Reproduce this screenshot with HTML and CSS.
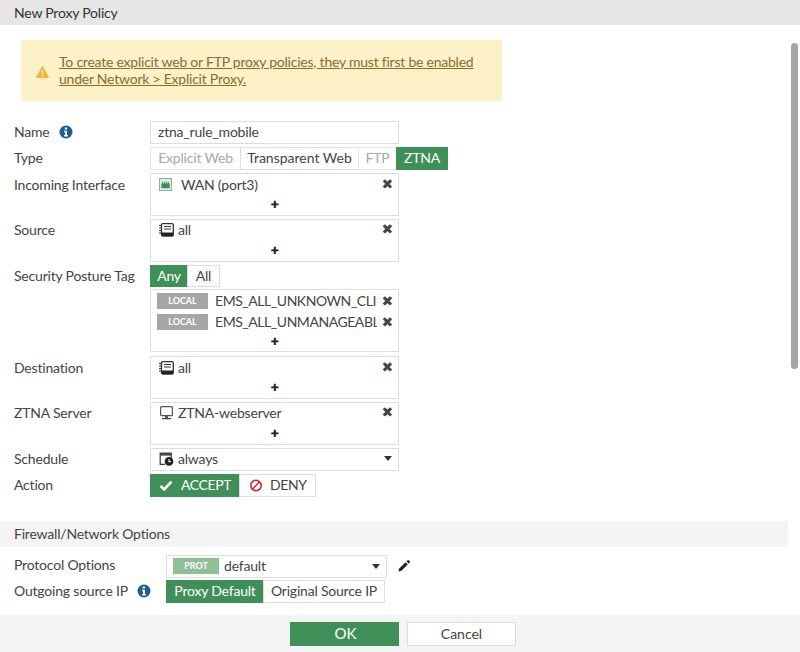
FILE: index.html
```html
<!DOCTYPE html>
<html lang="en">
<head>
<meta charset="utf-8">
<title>New Proxy Policy</title>
<link rel="stylesheet" href="styles.css">
</head>
<body>
<div class="page">
  <header class="title">New Proxy Policy</header>
  <main class="content">
    <div class="notice">
      <svg class="notice-icon" viewBox="0 0 14 13"><path d="M7 .6 13.6 12.4H.4Z" fill="#f5b335" stroke="#f5b335" stroke-linejoin="round"/><path d="M6.2 4.2h1.600l-.2 4.600H6.400ZM6.200 9.600h1.600v1.600H6.200Z" fill="#fdf1c8"/></svg>
      <a class="notice-text">To create explicit web or FTP proxy policies, they must first be enabled under Network &gt; Explicit Proxy.</a>
    </div>

    <div class="row r-name">
      <label class="label">Name <svg class="info" viewBox="0 0 14 14"><circle cx="7" cy="7" r="6.500" fill="#165f96"/><path d="M5.800 2.600h2.200v2H5.800ZM5 5.800h3v4.200h1v1.400H5V10h1V7.200H5Z" fill="#fff"/></svg></label>
      <div class="input">ztna_rule_mobile</div>
    </div>
    <div class="row r-type">
      <label class="label">Type</label>
      <div class="seg">
        <span class="opt dim w-explicit">Explicit Web</span><span class="opt solid w-transparent">Transparent Web</span><span class="opt dim w-ftp">FTP</span><span class="opt on w-ztna">ZTNA</span>
      </div>
    </div>
    <div class="row r-list r-first">
      <label class="label">Incoming Interface</label>
      <div class="list">
        <div class="item">
          <svg class="ic ic-wan" viewBox="0 0 14 14"><rect x=".5" y=".5" width="13" height="13" fill="#dfeee4" stroke="#8fa89a"/><path d="M2.500 11V6h1V4h1v2h1V4h1v2h1V4h1v2h1V4h1v2h1v5Z" fill="#3f8f58"/></svg>
          <span class="item-text">WAN (port3)</span>
          <span class="x">✖</span>
        </div>
        <div class="plus">✚</div>
      </div>
    </div>
    <div class="row r-list">
      <label class="label">Source</label>
      <div class="list">
        <div class="item">
          <svg class="ic ic-addr" viewBox="0 0 15 14"><rect x="2.500" y=".7" width="11.800" height="12.300" rx="1.200" fill="#fff" stroke="#333" stroke-width="1.300"/><path d="M0 2.500h2.500M0 5h2.500M0 7.500h2.500M0 10h2.500" stroke="#333" stroke-width="1.100"/><path d="M5 3.500h7M5 6h7" stroke="#333" stroke-width="1.100"/><rect x="3" y="9.500" width="11" height="3.500" fill="#222"/></svg>
          <span class="item-text">all</span>
          <span class="x">✖</span>
        </div>
        <div class="plus">✚</div>
      </div>
    </div>
    <div class="row r-any">
      <label class="label">Security Posture Tag</label>
      <div class="seg">
        <span class="opt on w-any">Any</span><span class="opt solid w-all">All</span>
      </div>
    </div>
    <div class="row r-tags">
      <span class="label"></span>
      <div class="list list-tags">
        <div class="item tag-item">
          <span class="badge">LOCAL</span>
          <span class="tag-text">EMS_ALL_UNKNOWN_CLIENTS</span>
          <span class="x">✖</span>
        </div>
        <div class="item tag-item">
          <span class="badge">LOCAL</span>
          <span class="tag-text">EMS_ALL_UNMANAGEABLE_CLIENTS</span>
          <span class="x">✖</span>
        </div>
        <div class="plus">✚</div>
      </div>
    </div>
    <div class="row r-list r-first">
      <label class="label">Destination</label>
      <div class="list">
        <div class="item">
          <svg class="ic ic-addr" viewBox="0 0 15 14"><rect x="2.500" y=".7" width="11.800" height="12.300" rx="1.200" fill="#fff" stroke="#333" stroke-width="1.300"/><path d="M0 2.500h2.500M0 5h2.500M0 7.500h2.500M0 10h2.500" stroke="#333" stroke-width="1.100"/><path d="M5 3.500h7M5 6h7" stroke="#333" stroke-width="1.100"/><rect x="3" y="9.500" width="11" height="3.500" fill="#222"/></svg>
          <span class="item-text">all</span>
          <span class="x">✖</span>
        </div>
        <div class="plus">✚</div>
      </div>
    </div>
    <div class="row r-list">
      <label class="label">ZTNA Server</label>
      <div class="list">
        <div class="item">
          <svg class="ic ic-addr" viewBox="0 0 15 14"><rect x="1.600" y=".7" width="11.800" height="9" rx="1" fill="#fff" stroke="#555" stroke-width="1.200"/><path d="M6 9.700h3V12H6Z" fill="#555"/><path d="M3 12.600h9" stroke="#444" stroke-width="1.300"/></svg>
          <span class="item-text">ZTNA-webserver</span>
          <span class="x">✖</span>
        </div>
        <div class="plus">✚</div>
      </div>
    </div>
    <div class="row r-sched">
      <label class="label">Schedule</label>
      <div class="select">
        <svg class="ic ic-addr" viewBox="0 0 15 14"><path d="M6 12.400H1.200V1.200h11v5" fill="none" stroke="#444" stroke-width="1.300"/><rect x="1" y="1" width="11.400" height="2.600" fill="#444"/><circle cx="10" cy="9.400" r="4.300" fill="#222"/><path d="M10 7v2.600h1.800" fill="none" stroke="#fff" stroke-width="1.100"/></svg>
        <span class="select-text">always</span>
        <span class="caret"></span>
      </div>
    </div>
    <div class="row r-action">
      <label class="label">Action</label>
      <div class="seg">
        <span class="opt on act-accept"><svg class="act-ic" viewBox="0 0 14 12"><path d="M1.500 6.400 5.200 10 12.500 2.200" fill="none" stroke="#fff" stroke-width="2.600"/></svg>ACCEPT</span><span class="opt solid act-deny"><svg class="act-ic" viewBox="0 0 14 14"><circle cx="7" cy="7" r="5.600" fill="none" stroke="#d3232f" stroke-width="1.700"/><path d="M3 11 11 3" stroke="#d3232f" stroke-width="1.700"/></svg>DENY</span>
      </div>
    </div>

    <h2 class="section">Firewall/Network Options</h2>

    <div class="row r-proto">
      <label class="label label-wide">Protocol Options</label>
      <div class="select select-proto">
        <span class="badge badge-prot">PROT</span>
        <span class="select-text">default</span>
        <span class="caret"></span>
      </div>
      <svg class="pencil" viewBox="0 0 14 14"><path d="M1.400 12.600 2.200 9.600 8.600 3.200 10.800 5.400 4.400 11.800Z" fill="#222"/><path d="M9.400 2.400 10.600 1.200a.8.8 0 0 1 1.100 0l1.100 1.100a.8.8 0 0 1 0 1.100L11.600 4.600Z" fill="#222"/></svg>
    </div>
    <div class="row r-out">
      <label class="label label-wide">Outgoing source IP <svg class="info" viewBox="0 0 14 14"><circle cx="7" cy="7" r="6.500" fill="#165f96"/><path d="M5.800 2.600h2.200v2H5.800ZM5 5.800h3v4.200h1v1.400H5V10h1V7.200H5Z" fill="#fff"/></svg></label>
      <div class="seg">
        <span class="opt on w-proxy">Proxy Default</span><span class="opt solid w-orig">Original Source IP</span>
      </div>
    </div>
    <div class="scrollbar"></div>
  </main>
  <footer class="footer">
    <button class="btn btn-ok">OK</button>
    <button class="btn btn-cancel">Cancel</button>
  </footer>
</div>
</body>
</html>
```
FILE: styles.css
```css
* { box-sizing: border-box; }
html, body { margin: 0; height: 100%; background: #fff; overflow: hidden; }
body { font-family: Lato, "Open Sans", sans-serif; font-size: 14px; color: #444; letter-spacing: -0.2px; }
.page { width: 800px; height: 652px; display: flex; flex-direction: column; }
.title { height: 25px; line-height: 25px; padding-left: 14px; background: #e6e6e6; color: #333; flex: none; }
.content { flex: 1; position: relative; padding-top: 15px; overflow: hidden; }
.notice { margin-left: 21px; width: 481px; height: 61px; background: #fdf1c8; display: flex; align-items: center; padding: 0 0 2px 15px; margin-bottom: 20px; }
.notice-icon { width: 13px; height: 12px; flex: none; margin-right: 10px; margin-top: 4px; }
.notice-text { color: #8a6d2f; text-decoration: underline; line-height: 17px; width: 425px; letter-spacing: -0.23px; }
.row { display: flex; padding-left: 14px; }
.label { width: 136px; flex: none; display: flex; align-items: flex-start; line-height: 22px; gap: 9px; color: #444; }
.label-wide { width: 152px; }
.info { width: 14px; height: 14px; margin-top: 4px; }
.input { width: 249px; height: 23px; border: 1px solid #ddd; padding-left: 7px; line-height: 20px; color: #444; }
.r-name { margin-bottom: 3px; }
.r-type { margin-bottom: 3px; }
.seg { display: flex; height: 23px; }
.opt { border: 1px solid #e6e6e6; line-height: 20px; text-align: center; white-space: nowrap; margin-left: -1px; }
.opt:first-child { margin-left: 0; }
.dim { color: #a8a8a8; }
.solid { color: #444; border-color: #ddd; }
.on { background: #3f8f58; border-color: #3f8f58; color: #fff; }
.w-explicit { width: 91px; }
.w-transparent { width: 119px; letter-spacing: 0; }
.w-ftp { width: 39px; }
.w-ztna { width: 52px; }
.w-any { width: 38px; }
.w-all { width: 33px; }
.w-proxy { width: 98px; }
.w-orig { width: 122px; }
.list { width: 249px; height: 43px; border: 1px solid #ddd; position: relative; }
.r-list { margin-bottom: 3px; }
.r-first .label { padding-top: 1px; }
.r-first .item { padding-top: 1px; }
.item { height: 20px; margin-bottom: 2px; display: flex; align-items: center; position: relative; padding-left: 8px; line-height: 20px; }
.ic { width: 13px; height: 13px; flex: none; margin-right: 9px; }
.ic-addr { width: 15px; height: 14px; margin-right: 4px; }
.item-text { flex: 1; white-space: nowrap; }
.x { position: absolute; right: 5px; top: 0; font-size: 14px; line-height: 18px; color: #444; font-family: "DejaVu Sans", sans-serif; }
.r-first .x { top: 1px; }
.plus { text-align: center; font-size: 10px; line-height: 18px; height: 18px; color: #222; font-family: "DejaVu Sans", sans-serif; }
.r-any { margin-top: 2px; margin-bottom: 2px; }
.r-any .seg { height: 22px; }
.r-any .opt { line-height: 20px; }
.r-tags { margin-bottom: 4px; }
.list-tags { height: 63px; }
.tag-item { height: 20px; margin-bottom: 1px; padding-left: 6px; }
.tag-item .x { top: 1px; }
.tag-item:first-child { margin-top: 1px; }
.badge { width: 51px; height: 16px; background: #a6a6a6; color: #fff; font-size: 9px; font-weight: 700; line-height: 16px; letter-spacing: 0; text-align: center; flex: none; margin-right: 7px; }
.tag-text { width: 162px; overflow: hidden; white-space: nowrap; letter-spacing: -0.45px; }
.r-sched { margin-bottom: 3px; }
.select { width: 249px; height: 23px; border: 1px solid #ddd; display: flex; align-items: center; padding-left: 8px; padding-bottom: 2px; position: relative; }
.select-text { flex: 1; }
.caret { width: 0; height: 0; border-left: 4.500px solid transparent; border-right: 4.500px solid transparent; border-top: 5px solid #333; margin-right: 6px; }
.r-action { margin-bottom: 24px; }
.act-accept { padding-left: 8px; text-align: left; width: 90px; background: #3f8f58; letter-spacing: -0.4px; }
.act-deny { padding-left: 9px; text-align: left; width: 77px; letter-spacing: -0.4px; }
.act-deny .act-ic { margin-right: 7px; }
.act-ic { width: 14px; height: 13px; margin-right: 8px; vertical-align: -2px; }
.section { margin: 0 0 7px; width: 788px; height: 26px; background: #f4f4f4; padding-left: 14px; line-height: 26px; font-size: 14px; font-weight: 400; color: #444; }
.r-proto { height: 24px; margin-bottom: 2px; align-items: center; }
.r-proto .label { position: relative; bottom: 1px; }
.select-proto { width: 221px; height: 23px; padding-left: 6px; padding-bottom: 0; }
.badge-prot { background: #8fbf95; width: 46px; margin-right: 5px; }
.select-proto .select-text { position: relative; bottom: 1px; }
.pencil { width: 14px; height: 14px; margin-left: 10px; }
.scrollbar { position: absolute; left: 791px; top: 18px; width: 7px; height: 326px; border-radius: 4px; background: #a6a6a6; }
.footer { height: 37px; flex: none; background: #f4f4f4; display: flex; justify-content: center; align-items: flex-start; gap: 8px; padding: 7px 0 0 6px; }
.btn { width: 109px; height: 24px; font: inherit; border: 1px solid #ddd; padding: 0 0 2px; }
.btn-ok { background: #3f8f58; border-color: #3f8f58; color: #fff; font-size: 15px; padding-left: 2px; }
.btn-cancel { background: #fff; color: #444; }
```
